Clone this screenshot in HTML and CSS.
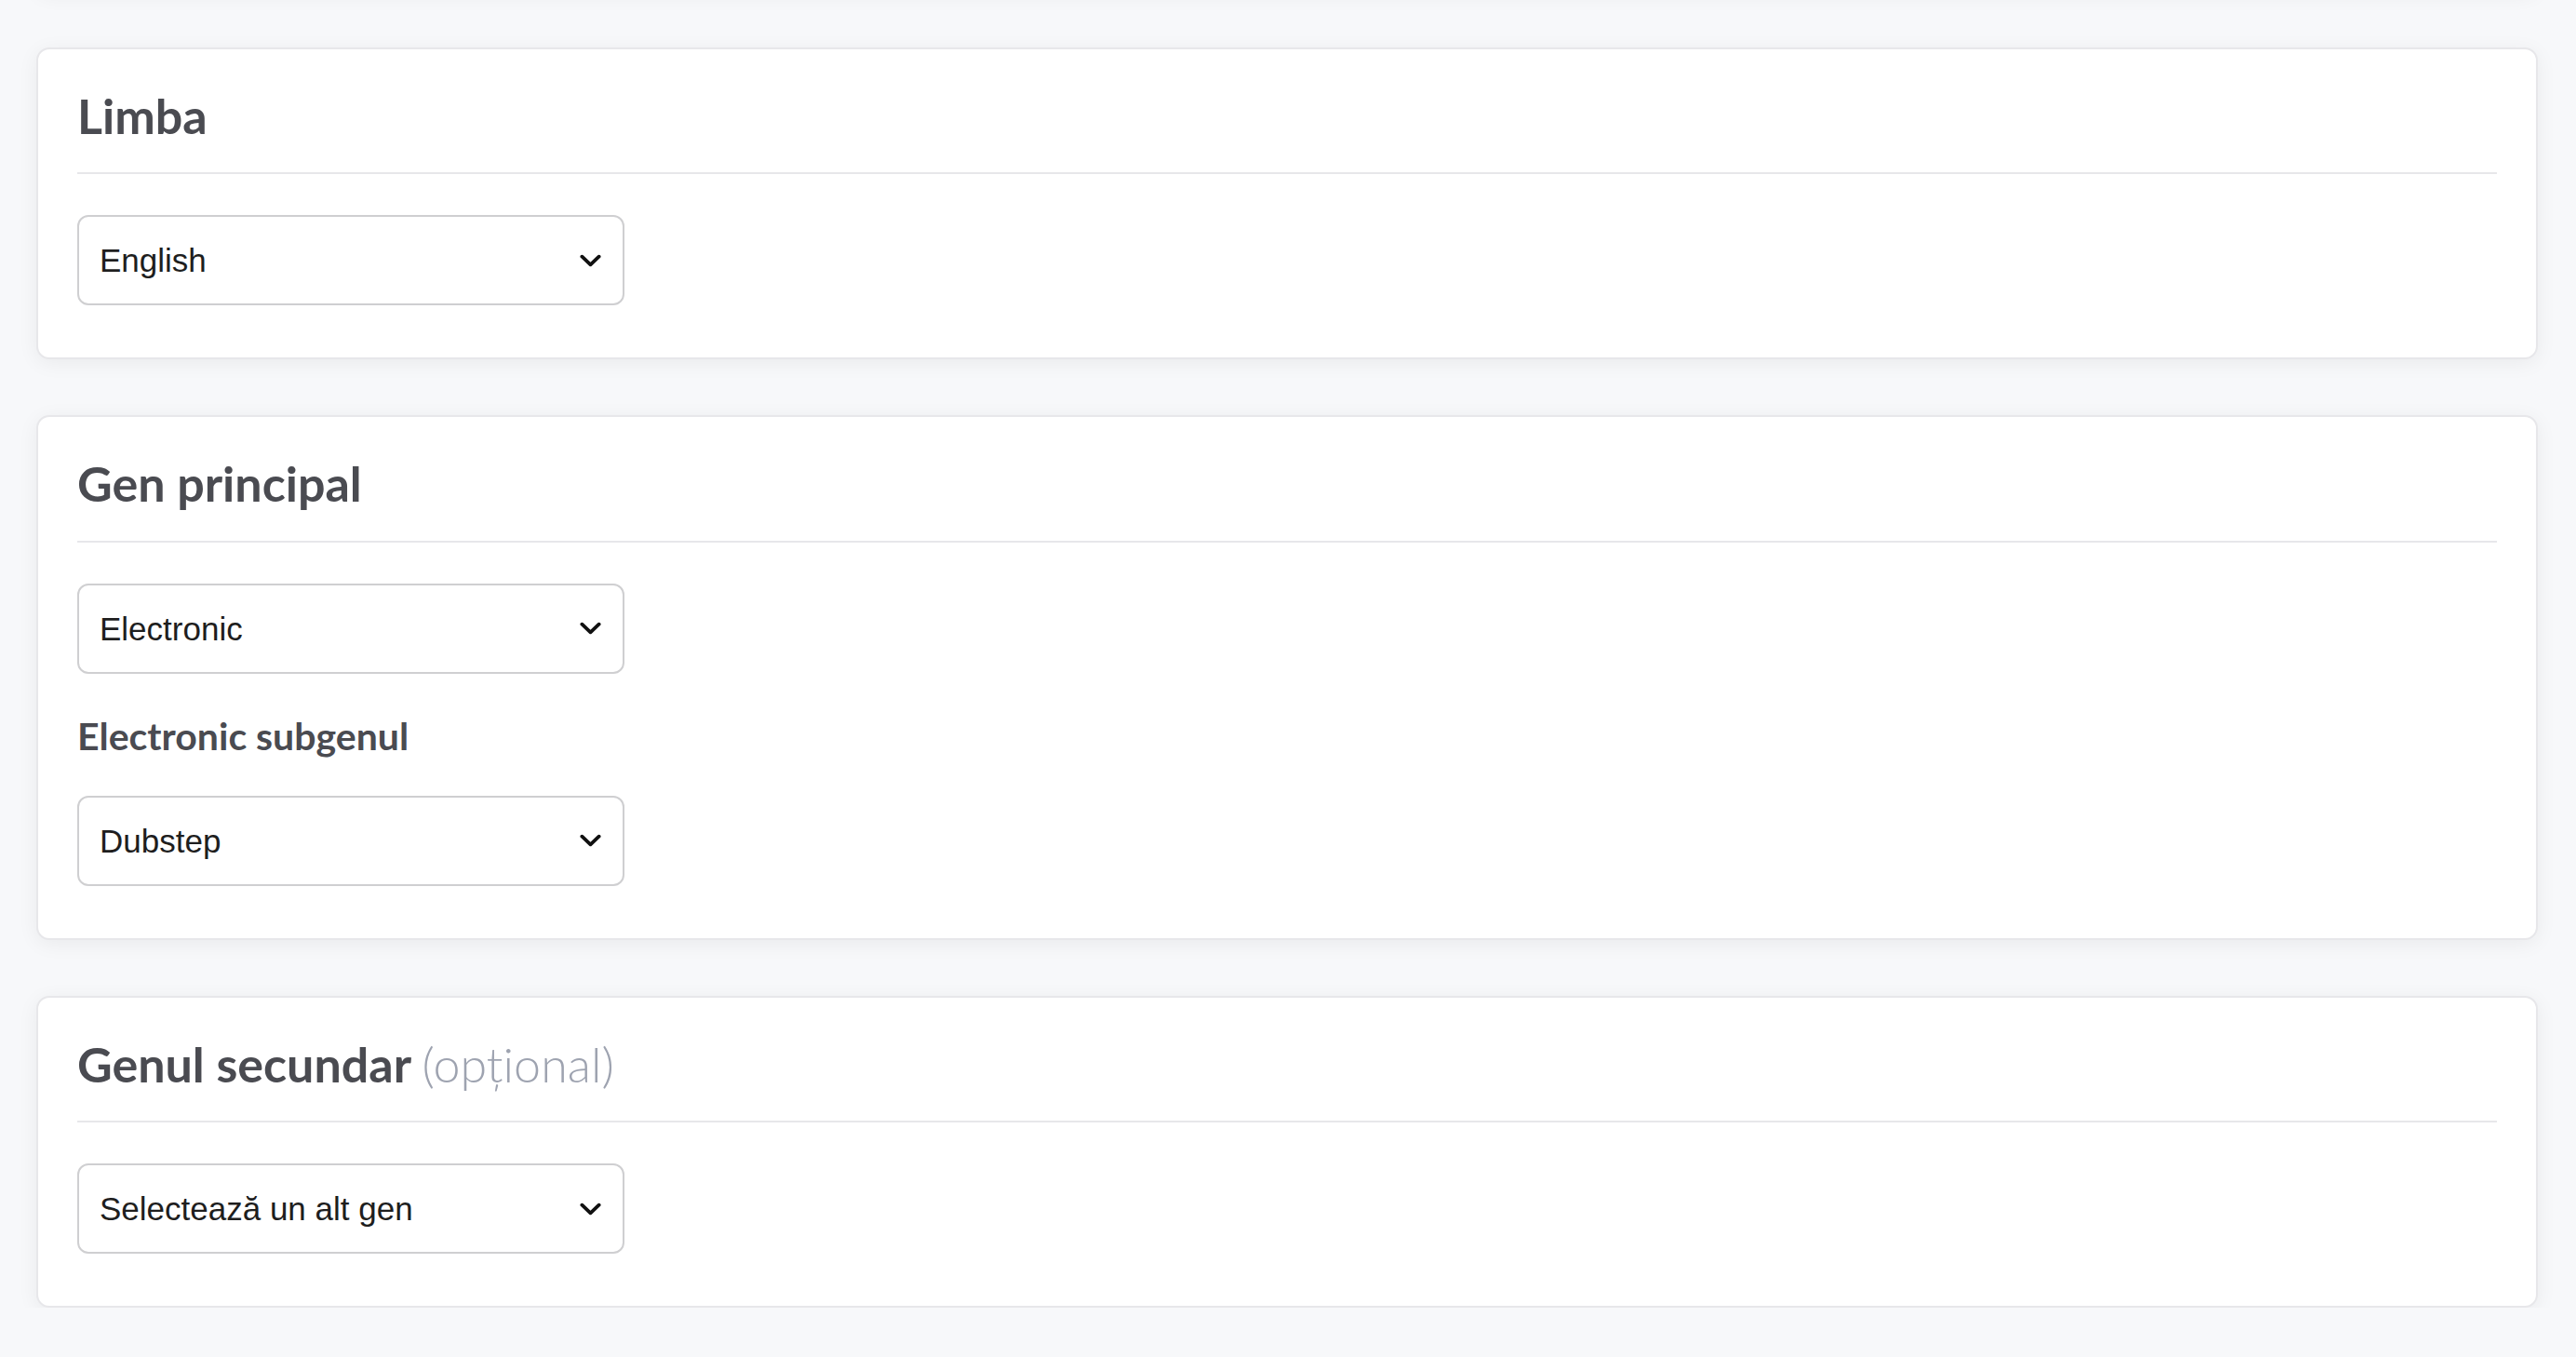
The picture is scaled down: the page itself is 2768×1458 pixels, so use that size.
FILE: index.html
```html
<!DOCTYPE html>
<html lang="ro">

<head>
  <meta charset="UTF-8" />
  <meta name="viewport" content="width=device-width, initial-scale=1.0" />
  <title>Setări release</title>
  <link rel="stylesheet" href="styles.css">
</head>

<body>
  <div class="container">
    <div class="card card-prev"></div>

    <section class="card">
      <h2 class="card-title">Limba</h2>
      <div class="select-wrap">
        <select id="language" name="language">
          <option value="en">English</option>
          <option value="ro">Română</option>
        </select>
        <svg class="chevron" viewBox="0 0 24 14" aria-hidden="true"><path d="M2.5 2.5 12 11.5 21.5 2.5" /></svg>
      </div>
    </section>

    <section class="card">
      <h2 class="card-title">Gen principal</h2>
      <div class="select-wrap">
        <select id="mainGenre" name="main_genre">
          <option value="electronic">Electronic</option>
          <option value="pop">Pop</option>
          <option value="rock">Rock</option>
        </select>
        <svg class="chevron" viewBox="0 0 24 14" aria-hidden="true"><path d="M2.5 2.5 12 11.5 21.5 2.5" /></svg>
      </div>

      <label class="field-label" for="subGenre">Electronic subgenul</label>
      <div class="select-wrap">
        <select id="subGenre" name="sub_genre">
          <option value="dubstep">Dubstep</option>
          <option value="house">House</option>
          <option value="techno">Techno</option>
        </select>
        <svg class="chevron" viewBox="0 0 24 14" aria-hidden="true"><path d="M2.5 2.5 12 11.5 21.5 2.5" /></svg>
      </div>
    </section>

    <section class="card">
      <h2 class="card-title">Genul secundar <span class="muted">(opțional)</span></h2>
      <div class="select-wrap">
        <select id="secondaryGenre" name="secondary_genre">
          <option value="">Selectează un alt gen</option>
          <option value="pop">Pop</option>
          <option value="rock">Rock</option>
        </select>
        <svg class="chevron" viewBox="0 0 24 14" aria-hidden="true"><path d="M2.5 2.5 12 11.5 21.5 2.5" /></svg>
      </div>
    </section>
  </div>
</body>

</html>
```

FILE: styles.css
```css
body {
  font-family: Lato, "Noto Sans", sans-serif;
  margin: 0;
  background-color: #f7f8fa;
  overflow: hidden;
}

.container {
  display: flex;
  flex-direction: column;
  gap: 60px;
  padding: 0 41px 0 39px;
}

.card {
  background: white;
  border: 2px solid #e7e7ea;
  border-radius: 14px;
  box-shadow: 0 4px 22px rgba(0, 0, 0, 0.06);
  padding: 40px 42px 56px;
}

.card-prev {
  height: 40px;
  margin-top: -149px;
}

.card-title {
  margin: 0 0 44px;
  padding-bottom: 30px;
  border-bottom: 2px solid #e7e7ea;
  font-size: 52px;
  font-weight: bold;
  line-height: 1.2;
  color: #4a4b51;
}

.muted {
  font-weight: 300;
  color: #9ea3b0;
}

.field-label {
  display: block;
  margin: 42px 0 40px;
  font-size: 41px;
  font-weight: bold;
  line-height: 1.2;
  color: #4a4b51;
}

.select-wrap {
  position: relative;
  width: 588px;
}

.select-wrap select {
  display: block;
  width: 100%;
  height: 97px;
  padding: 0 60px 0 22px;
  font-family: "Liberation Sans", Arial, sans-serif;
  font-size: 35px;
  color: #1e1e1e;
  background: white;
  border: 2px solid #cfcfd1;
  border-radius: 12px;
  -webkit-appearance: none;
  appearance: none;
}

.chevron {
  position: absolute;
  right: 25px;
  top: 50%;
  width: 23px;
  height: 14px;
  margin-top: -7px;
  pointer-events: none;
  fill: none;
  stroke: #111;
  stroke-width: 4;
  stroke-linecap: round;
  stroke-linejoin: round;
}
```
